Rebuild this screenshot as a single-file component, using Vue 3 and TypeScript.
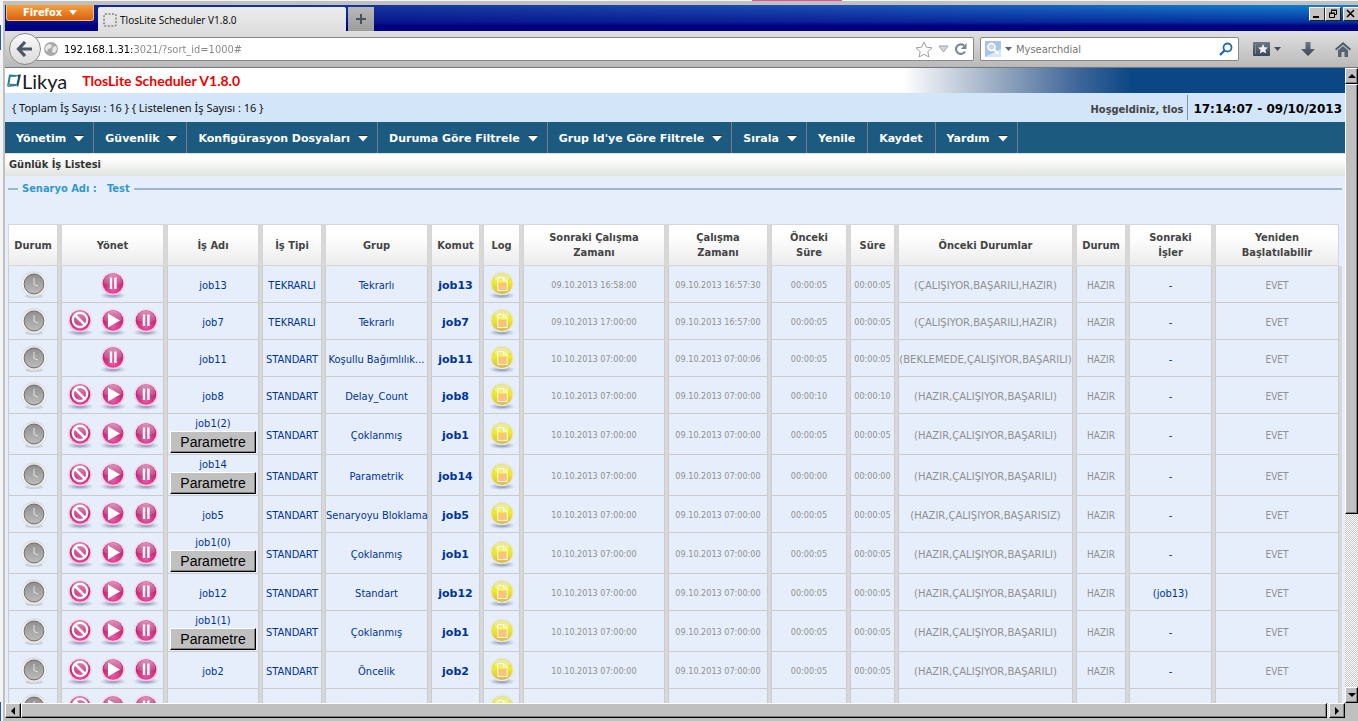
<script setup lang="ts">
interface Job {
  name: string
  type: string
  group: string
  command: string
  next: string
  last: string
  before: string
  duration: string
  history: string
  after: string
  full: boolean
  params: boolean
}

interface MenuItem {
  label: string
  arrow: boolean
}

const menu: MenuItem[] = [
  { label: 'Yönetim', arrow: true },
  { label: 'Güvenlik', arrow: true },
  { label: 'Konfigürasyon Dosyaları', arrow: true },
  { label: 'Duruma Göre Filtrele', arrow: true },
  { label: "Grup Id'ye Göre Filtrele", arrow: true },
  { label: 'Sırala', arrow: true },
  { label: 'Yenile', arrow: false },
  { label: 'Kaydet', arrow: false },
  { label: 'Yardım', arrow: true },
]

const columns: string[] = [
  'Durum', 'Yönet', 'İş Adı', 'İş Tipi', 'Grup', 'Komut', 'Log', 'Sonraki Çalışma Zamanı',
  'Çalışma Zamanı', 'Önceki Süre', 'Süre', 'Önceki Durumlar', 'Durum', 'Sonraki İşler', 'Yeniden Başlatılabilir',
]

const ready = '(HAZIR,ÇALIŞIYOR,BAŞARILI)'

function job(name: string, group: string, command: string, extra: Partial<Job> = {}): Job {
  return {
    name, group, command,
    type: 'STANDART',
    next: '10.10.2013 07:00:00',
    last: '09.10.2013 07:00:00',
    before: '00:00:05',
    duration: '00:00:05',
    history: ready,
    after: '-',
    full: true,
    params: false,
    ...extra,
  }
}

const jobs: Job[] = [
  job('job13', 'Tekrarlı', 'job13', { type: 'TEKRARLI', next: '09.10.2013 16:58:00', last: '09.10.2013 16:57:30', history: '(ÇALIŞIYOR,BAŞARILI,HAZIR)', full: false }),
  job('job7', 'Tekrarlı', 'job7', { type: 'TEKRARLI', next: '09.10.2013 17:00:00', last: '09.10.2013 16:57:00', history: '(ÇALIŞIYOR,BAŞARILI,HAZIR)' }),
  job('job11', 'Koşullu Bağımlılık...', 'job11', { last: '09.10.2013 07:00:06', history: '(BEKLEMEDE,ÇALIŞIYOR,BAŞARILI)', full: false }),
  job('job8', 'Delay_Count', 'job8', { before: '00:00:10', duration: '00:00:10' }),
  job('job1(2)', 'Çoklanmış', 'job1', { params: true }),
  job('job14', 'Parametrik', 'job14', { before: '00:00:00', duration: '00:00:00', params: true }),
  job('job5', 'Senaryoyu Bloklama', 'job5', { history: '(HAZIR,ÇALIŞIYOR,BAŞARISIZ)' }),
  job('job1(0)', 'Çoklanmış', 'job1', { params: true }),
  job('job12', 'Standart', 'job12', { after: '(job13)' }),
  job('job1(1)', 'Çoklanmış', 'job1', { params: true }),
  job('job2', 'Öncelik', 'job2'),
]
</script>

<template>
  <div class="screen">
    <svg class="defs" aria-hidden="true">
      <defs>
        <radialGradient id="gPink" cx="50%" cy="78%" r="70%">
          <stop offset="0" stop-color="#e85aa8" /><stop offset="0.55" stop-color="#c8357f" /><stop offset="1" stop-color="#b01a6e" />
        </radialGradient>
        <linearGradient id="gGloss" x1="0" y1="0" x2="0" y2="1">
          <stop offset="0" stop-color="#fff" stop-opacity="0.55" /><stop offset="1" stop-color="#fff" stop-opacity="0.08" />
        </linearGradient>
        <linearGradient id="gRim" x1="0" y1="0" x2="0" y2="1">
          <stop offset="0" stop-color="#f7dcec" /><stop offset="1" stop-color="#fbc3e2" />
        </linearGradient>
        <radialGradient id="gShadow">
          <stop offset="0" stop-color="#5d6f92" stop-opacity="0.85" /><stop offset="1" stop-color="#8c9ab8" stop-opacity="0" />
        </radialGradient>
        <linearGradient id="gYellow" x1="0" y1="0" x2="0" y2="1">
          <stop offset="0" stop-color="#d9dc70" /><stop offset="0.45" stop-color="#ecec28" /><stop offset="1" stop-color="#d8b958" />
        </linearGradient>
        <linearGradient id="gGrey" x1="0" y1="0" x2="0" y2="1">
          <stop offset="0" stop-color="#8f8f8f" /><stop offset="1" stop-color="#bcbcbc" />
        </linearGradient>
        <linearGradient id="gRing" x1="0" y1="0" x2="0" y2="1">
          <stop offset="0" stop-color="#dcdcdc" /><stop offset="0.5" stop-color="#fbfbfb" /><stop offset="1" stop-color="#e2e2e0" />
        </linearGradient>
        <linearGradient id="gSteel" x1="0" y1="0" x2="0" y2="1">
          <stop offset="0" stop-color="#6b7885" /><stop offset="1" stop-color="#3a4653" />
        </linearGradient>
      </defs>
      <symbol id="ball" viewBox="0 0 28 30">
        <ellipse cx="14" cy="25.500" rx="13.500" ry="3.600" fill="url(#gShadow)" />
        <circle cx="14" cy="13.500" r="12" fill="url(#gRim)" />
        <circle cx="14" cy="13.500" r="10.300" fill="url(#gPink)" />
        <path d="M4.500 13a9.500 9.500 0 0 1 19 0c-5 3-14 3-19 0z" fill="url(#gGloss)" />
      </symbol>
      <symbol id="pause" viewBox="0 0 28 30">
        <use href="#ball" width="28" height="30" />
        <path d="M10.800 7.500h2.400v11.500h-2.400zM15.200 7.500h2.400v11.500h-2.400z" fill="#fff" />
      </symbol>
      <symbol id="play" viewBox="0 0 28 30">
        <use href="#ball" width="28" height="30" />
        <path d="M9 6.500l12 7-12 7z" fill="#fff" />
      </symbol>
      <symbol id="ban" viewBox="0 0 28 30">
        <use href="#ball" width="28" height="30" />
        <circle cx="14" cy="13" r="7.200" fill="none" stroke="#fff" stroke-width="2.200" />
        <path d="M9 8l10 10" stroke="#fff" stroke-width="2.500" />
      </symbol>
      <symbol id="clock" viewBox="0 0 28 30">
        <ellipse cx="14" cy="26" rx="9" ry="2" fill="#b9bcc4" opacity="0.6" />
        <circle cx="14" cy="14" r="12.800" fill="#d9dbe0" />
        <circle cx="14" cy="14" r="12.200" fill="url(#gRing)" />
        <circle cx="14" cy="14" r="9.900" fill="url(#gGrey)" stroke="#6e6e6e" />
        <path d="M14 8v6.500l4 1.500" fill="none" stroke="#e2e2e2" />
      </symbol>
      <symbol id="log" viewBox="0 0 28 30">
        <ellipse cx="14" cy="25.500" rx="13.500" ry="3.600" fill="url(#gShadow)" />
        <circle cx="14" cy="13.500" r="12" fill="#e9e7dc" />
        <circle cx="14" cy="13.500" r="10.500" fill="url(#gYellow)" />
        <ellipse cx="14" cy="8" rx="7.500" ry="4.500" fill="#fff" opacity="0.35" />
        <path d="M10 13h9v7.500h-9z" fill="#f8c47c" />
        <path d="M9.800 7.500h5.700l3.700 3.500v9.500H9.800z" fill="none" stroke="#fffbe6" stroke-width="0.900" />
        <path d="M15.500 7.500v3.500h3.700" fill="none" stroke="#fffbe6" stroke-width="0.900" />
      </symbol>
    </svg>

    <div class="window">
      <header class="titlebar">
        <button class="firefox" type="button">Firefox <i class="tri"></i></button>
        <div class="tab">
          <svg width="14" height="14" viewBox="0 0 14 14"><rect x="1" y="1" width="12" height="12" rx="1" fill="none" stroke="#555" stroke-dasharray="2 1.500" /></svg>
          <span>TlosLite Scheduler V1.8.0</span>
        </div>
        <button class="newtab" type="button" aria-label="Yeni sekme">
          <svg width="12" height="12" viewBox="0 0 12 12"><path d="M6 1v10M1 6h10" stroke="#46525e" stroke-width="2" /></svg>
        </button>
        <div class="winbtns">
          <button type="button" aria-label="Simge durumuna küçült"><svg width="12" height="10" viewBox="0 0 12 10"><path d="M2 8h6" stroke="#000" stroke-width="2" /></svg></button>
          <button type="button" aria-label="Önceki boyut"><svg width="12" height="10" viewBox="0 0 12 10"><path d="M4.500 5V1.500h5v4H8M4 1h6M2.500 4.500h5v4h-5zM2 4h6" fill="none" stroke="#000" /></svg></button>
          <button class="shut" type="button" aria-label="Kapat"><svg width="10" height="10" viewBox="0 0 10 10"><path d="M1 1l7 7M8 1L1 8" stroke="#000" stroke-width="1.600" /></svg></button>
        </div>
      </header>

      <nav class="toolbar">
        <button class="back" type="button" aria-label="Geri">
          <svg width="18" height="16" viewBox="0 0 18 16"><path d="M9 1L2.500 8 9 15M3 8h13" fill="none" stroke="#4b5763" stroke-width="3.200" /></svg>
        </button>
        <div class="field url">
          <svg width="16" height="16" viewBox="0 0 16 16"><circle cx="8" cy="8" r="7" fill="#a9a9a9" /><path d="M3 5l3-2 3 1-1 3-3 1-1 3-2-3zM10 6l3-1 1 3-2 4-3-1z" fill="#e8e8e8" /></svg>
          <input type="text" aria-label="Adres" value="192.168.1.31:3021/?sort_id=1000#" />
          <svg width="18" height="17" viewBox="0 0 18 17"><path d="M9 1l2.400 5.200 5.600.6-4.200 3.800 1.200 5.500L9 13.300l-5 2.800 1.200-5.500L1 6.800l5.600-.6z" fill="#fafafa" stroke="#9ba0a6" /></svg>
          <svg width="11" height="8" viewBox="0 0 11 8"><path d="M1 1h9L5.500 7z" fill="#d5d9dd" stroke="#9aa3ab" /></svg>
          <svg width="14" height="14" viewBox="0 0 14 14"><path d="M11 9.500A4.800 4.800 0 1 1 10 3.500" fill="none" stroke="#7e8994" stroke-width="2.200" /><path d="M12.500 1v6H6.800z" fill="#7e8994" /></svg>
        </div>
        <div class="field search">
          <svg width="16" height="16" viewBox="0 0 16 16"><rect width="16" height="16" fill="#a9c3ea" /><path d="M0 16L16 8v8z" fill="#d8e6f8" /><circle cx="6.500" cy="6" r="3.500" fill="#c6d8f2" stroke="#fff" stroke-width="1.600" /><path d="M9 8.500l4.500 4.500" stroke="#fff" stroke-width="2" /></svg>
          <svg width="7" height="5" viewBox="0 0 7 5"><path d="M0 0h7L3.500 4z" fill="#666" /></svg>
          <input type="text" aria-label="Arama" placeholder="Mysearchdial" />
          <svg width="14" height="14" viewBox="0 0 14 14"><circle cx="8.500" cy="5.500" r="4" fill="none" stroke="#2a6aa8" stroke-width="1.800" /><path d="M5.500 8.500L1 13" stroke="#2a6aa8" stroke-width="2.400" /></svg>
        </div>
        <div class="tools">
          <button type="button" aria-label="Yer imleri">
            <svg width="28" height="16" viewBox="0 0 28 16"><rect y="1" width="17" height="14" rx="1" fill="url(#gSteel)" /><path d="M2.500 3v10" stroke="#7d8893" /><path d="M10 3l1.500 3.200 3.500.4-2.600 2.300.8 3.600L10 10.700l-3.200 1.800.8-3.600L5 6.600l3.500-.4z" fill="#eee" /><path d="M21 6h7l-3.500 4z" fill="#444d57" /></svg>
          </button>
          <button type="button" aria-label="İndirilenler">
            <svg width="14" height="14" viewBox="0 0 14 14"><path d="M4.500 0h5v7H14l-7 7-7-7h4.500z" fill="url(#gSteel)" /></svg>
          </button>
          <button type="button" aria-label="Giriş sayfası">
            <svg width="16" height="15" viewBox="0 0 16 15"><path d="M8 0l8 7-1.200 1.500L8 2.700 1.200 8.500 0 7z" fill="#4f5b67" /><path d="M3 8.200l5-4.300 5 4.300V15H9.500v-5h-3v5H3z" fill="#56626e" /></svg>
          </button>
        </div>
      </nav>

      <div class="viewport">
        <main class="page">
          <header class="brand">
            <svg width="14" height="17" viewBox="0 0 14 17"><path d="M2 2.500l8 .5-.5 1.800-6 .2z" fill="#2b8095" /><path d="M2 2.500l1.700 2L2.500 12 0 14.500z" fill="#2b8095" /><path d="M0 15l3-3.200 6.500.2.500 2z" fill="#3a7f96" /><path d="M10 3l4-.8-3 13.300-1.500-3.500 1.600-6.500z" fill="#174f70" /></svg>
            <span class="likya">Likya</span>
            <h1>TlosLite Scheduler V1.8.0</h1>
          </header>
          <div class="info">
            <span class="counts">{ Toplam İş Sayısı : 16 } { Listelenen İş Sayısı : 16 }</span>
            <span class="hello">Hoşgeldiniz, tlos</span>
            <time class="now">17:14:07 - 09/10/2013</time>
          </div>
          <div class="menu">
            <button v-for="m in menu" :key="m.label" type="button" :class="{ drop: m.arrow }">
              {{ m.label }}<svg v-if="m.arrow" width="12" height="8" viewBox="0 0 12 8"><path d="M1 1h10L6 6.500z" fill="#fff" /><path d="M1 .5h10" stroke="#333" /></svg>
            </button>
          </div>
          <h2>Günlük İş Listesi</h2>
          <section class="panel">
            <fieldset>
              <legend>Senaryo Adı :&nbsp;&nbsp; Test</legend>
              <div class="clip">
                <table>
                  <colgroup><col v-for="(c, i) in columns" :key="i" :class="'c' + i" /></colgroup>
                  <thead>
                    <tr><th v-for="(c, i) in columns" :key="i" scope="col">{{ c }}</th></tr>
                  </thead>
                  <tbody>
                    <tr v-for="j in jobs" :key="j.name" :class="{ tall: j.params }">
                      <td><svg class="ico"><use href="#clock" /></svg></td>
                      <td>
                        <div class="acts">
                          <button v-if="j.full" type="button" aria-label="Durdur"><svg class="ico"><use href="#ban" /></svg></button>
                          <button v-if="j.full" type="button" aria-label="Başlat"><svg class="ico"><use href="#play" /></svg></button>
                          <button type="button" aria-label="Beklet"><svg class="ico"><use href="#pause" /></svg></button>
                        </div>
                      </td>
                      <td><a href="#">{{ j.name }}</a><button v-if="j.params" class="param" type="button">Parametre</button></td>
                      <td class="blue">{{ j.type }}</td>
                      <td class="blue">{{ j.group }}</td>
                      <td><a class="cmd" href="#">{{ j.command }}</a></td>
                      <td><svg class="ico"><use href="#log" /></svg></td>
                      <td>{{ j.next }}</td>
                      <td>{{ j.last }}</td>
                      <td>{{ j.before }}</td>
                      <td>{{ j.duration }}</td>
                      <td class="caps">{{ j.history }}</td>
                      <td class="state">HAZIR</td>
                      <td class="blue">{{ j.after }}</td>
                      <td class="state">EVET</td>
                    </tr>
                    <tr>
                      <td><svg class="ico"><use href="#clock" /></svg></td>
                      <td>
                        <div class="acts">
                          <button type="button" aria-label="Durdur"><svg class="ico"><use href="#ban" /></svg></button>
                          <button type="button" aria-label="Başlat"><svg class="ico"><use href="#play" /></svg></button>
                          <button type="button" aria-label="Beklet"><svg class="ico"><use href="#pause" /></svg></button>
                        </div>
                      </td>
                      <td v-for="n in 4" :key="n"></td>
                      <td><svg class="ico"><use href="#log" /></svg></td>
                      <td v-for="n in 8" :key="'e' + n"></td>
                    </tr>
                  </tbody>
                </table>
              </div>
            </fieldset>
          </section>
        </main>
        <div class="vbar">
          <button type="button" aria-label="Yukarı"><svg width="8" height="4" viewBox="0 0 8 4"><path d="M0 4h8L4 0z" /></svg></button>
          <div class="thumb"></div>
          <div class="rest"></div>
          <button type="button" aria-label="Aşağı"><svg width="8" height="4" viewBox="0 0 8 4"><path d="M0 0h8L4 4z" /></svg></button>
        </div>
        <div class="hbar">
          <button type="button" aria-label="Sola"><svg width="4" height="8" viewBox="0 0 4 8"><path d="M4 0v8L0 4z" /></svg></button>
          <div class="thumb"></div>
          <div class="rest"></div>
          <button type="button" aria-label="Sağa"><svg width="4" height="8" viewBox="0 0 4 8"><path d="M0 0v8l4-4z" /></svg></button>
        </div>
      </div>
    </div>
  </div>
</template>

<style>
html, body { overflow: hidden; }
</style>

<style scoped>
* { box-sizing: border-box; }
button { margin: 0; padding: 0; border: 0; background: none; font: inherit; color: inherit; }
svg { display: block; flex: none; }
.defs { position: absolute; width: 0; height: 0; }
.screen {
  height: 100vh; padding: 1px 0 0 3px; overflow: hidden;
  background:
    linear-gradient(#e0559a, #e0559a) 752px 0 / 90px 1px no-repeat,
    linear-gradient(#2b57a4, #2b57a4) 0 25px / 1px 25px no-repeat,
    linear-gradient(#2b57a4, #2b57a4) 0 100% / 1px 19px no-repeat, #f4f4f4;
  font-family: "DejaVu Sans Condensed", "DejaVu Sans", Tahoma, sans-serif; font-size: 10px;
}
.window { height: 100%; display: flex; flex-direction: column; background: #c0c0c0; padding: 4px 0 3px 2px; }

.titlebar {
  display: flex; align-items: flex-start; height: 26px; flex: none;
  background: linear-gradient(rgba(0, 0, 128, 0), rgba(0, 0, 128, 0.6) 65%, #000080 80%), linear-gradient(90deg, #10248c, #1c50b4 60%, #1084d0);
}
.firefox {
  display: flex; align-items: center; justify-content: center; gap: 7px; width: 88px; height: 16px; margin-left: 1px;
  background: linear-gradient(#f5a040, #d9620c); border: 1px solid #f8c080; border-top: 0; border-radius: 0 0 3px 3px;
  color: #fff; font-weight: bold; font-size: 11px; line-height: 14px;
}
.tri { border: 4px solid transparent; border-top: 5px solid #fff; border-bottom: 0; }
.tab {
  display: flex; align-items: center; gap: 3px; width: 248px; height: 24px; margin: 2px 2px 0 4px; padding: 1px 0 0 5px;
  background: linear-gradient(#ececec, #dedede); border-radius: 2px 2px 0 0; color: #111;
}
.tab span { font-family: "Noto Sans", sans-serif; font-size: 10px; }
.newtab { display: grid; place-items: center; width: 26px; height: 24px; margin-top: 2px; background: linear-gradient(#b9b9b9, #9c9c9c); }
.winbtns { display: flex; margin: 2px 0 0 auto; }
.winbtns button { display: grid; place-items: center; width: 16px; height: 14px; background: #c6c3c0; border: 1px solid; border-color: #fff #222 #222 #fff; }
.winbtns .shut { margin-left: 2px; width: 15px; border-right: 0; }

.toolbar { display: flex; align-items: center; height: 37px; flex: none; background: linear-gradient(#e0e0e0, #b9b9b9); border-bottom: 1px solid #777; }
.back {
  display: grid; place-items: center; width: 32px; height: 32px; margin-left: 4px; border: 1px solid #8c8c8c; border-radius: 50%;
  background: linear-gradient(#fcfcfc, #d9d9d9); z-index: 1;
}
.field { display: flex; align-items: center; height: 24px; background: #fff; border: 1px solid #888; border-radius: 2px; }
.field input { border: 0; outline: 0; padding: 1px 0 0; min-width: 0; flex: 1; background: none; font: inherit; font-size: 11px; color: #111; }
.url { flex: 1; margin-left: -6px; padding: 0 5px 0 8px; border-left: 0; gap: 5px; }
.field.url input { background: linear-gradient(90deg, #000 69px, #858585 69px); background-clip: text; -webkit-background-clip: text; color: transparent; }
.search { width: 259px; margin-left: 6px; padding: 0 5px 0 4px; gap: 4px; }
.search input::placeholder { color: #777; opacity: 1; }
.tools { display: flex; align-items: center; gap: 20px; margin: 0 7px 0 14px; }

.viewport { flex: 1; min-height: 0; display: grid; grid-template: minmax(0, 1fr) 15px / minmax(0, 1fr) 13px; }
.page { overflow: hidden; background: #e6eefb; }
.brand {
  display: flex; align-items: center; height: 25px; padding-left: 2px;
  background: linear-gradient(90deg, #fff 67%, #c5cfdc 71%, #8ba0bb 75%, #3f679b 80%, #0c4785 84%);
}
.likya { margin-left: 1px; font-family: Lato, sans-serif; font-size: 20px; line-height: 24px; color: #1b1b1b; }
h1 { margin: 0 0 0 15px; font-family: Lato, sans-serif; font-size: 14px; line-height: 24px; font-weight: bold; color: #f00000; }
.info { display: flex; align-items: center; height: 29px; background: #d2e5f9; color: #111; }
.counts { padding-left: 7px; font-family: "Noto Sans", sans-serif; font-size: 11px; }
.hello { margin-left: auto; font-weight: bold; font-size: 11px; color: #444; padding: 3px 4px 0 0; }
.now { display: flex; align-items: center; height: 25px; padding: 3px 3px 0 5px; border-left: 1px solid #8296ad; font-family: "DejaVu Sans", sans-serif; font-weight: bold; font-size: 12px; color: #000; }
.menu { display: flex; height: 31px; background: #1c5a80; }
.menu button {
  display: flex; align-items: center; gap: 7px; padding: 2px 12px 0 11px; border-right: 1px solid #777b8c; color: #fff; white-space: nowrap;
  font-family: "DejaVu Sans", sans-serif; font-weight: bold; font-size: 11px;
}
.menu .drop { padding-right: 8px; }
h2 { margin: 0; height: 23px; padding-left: 4px; border: 1px solid #e0e3e3; border-width: 1px 0; background: linear-gradient(#fff 20%, #e3e5e1); font-size: 11px; line-height: 21px; color: #333; }
.panel { padding: 6px 3px 0; }
fieldset { margin: 0; padding: 28px 0 0; min-width: 0; border: 0; border-top: 2px solid #9ab7d8; }
legend { margin-left: 10px; padding: 0 4px; font-size: 11px; line-height: 14px; font-weight: bold; color: #3399cc; }
.clip { overflow: hidden; }
table { width: calc(100% + 3px); margin-left: -3px; table-layout: fixed; border-collapse: separate; border-spacing: 3px 0; background: #d8d8d8; }
.c0, .c12 { width: 50px; }
.c1, .c4 { width: 103px; }
.c2 { width: 92px; }
.c3 { width: 60px; }
.c5 { width: 49px; }
.c6 { width: 37px; }
.c7 { width: 142px; }
.c8 { width: 100px; }
.c9 { width: 76px; }
.c10 { width: 45px; }
.c11 { width: 175px; }
.c13 { width: 83px; }
th { height: 42px; padding: 0 12px; border: 1px solid #d6d6d6; background: linear-gradient(#fff 25%, #ececec); font-size: 11px; line-height: 15px; color: #444; }
th:nth-child(1), th:nth-child(4), th:nth-child(6), th:nth-child(7), th:nth-child(11), th:nth-child(13) { padding: 0; }
th:nth-child(8) { padding: 0 20px; }
th:last-child { box-shadow: 4px 0 0 #e6eefb; }
td { height: 37px; padding: 2px 0 0; border: 1px solid #cbcbcb; border-top: 0; background: #e6eefb; text-align: center; white-space: nowrap; font-size: 9px; line-height: 13px; color: #909090; }
td:first-child { padding-left: 2px; }
.tall td { height: 41px; }
td a { display: block; color: #003399; text-decoration: none; font-size: 11px; }
.blue { font-size: 11px; color: #003399; }
.caps { font-family: "DejaVu Sans", sans-serif; font-size: 10px; }
.state { font-size: 10px; }
td a.cmd { font-family: "DejaVu Sans", sans-serif; font-weight: bold; font-size: 11px; }
.ico { width: 28px; height: 30px; margin: 0 auto; }
.acts { display: flex; justify-content: center; gap: 5px; }
.param {
  width: 86px; height: 22px; margin: 1px auto 0; display: block; border: 1px solid; border-color: #fff #000 #000 #fff; box-shadow: inset -1px -1px #808080;
  background: #c0c0c0; color: #000; font-family: "Liberation Sans", sans-serif; font-size: 14px; line-height: 18px;
}

.vbar, .hbar { display: flex; background: repeating-conic-gradient(#fff 0 25%, #c6c6c6 0 50%) 0 0 / 2px 2px; }
.vbar { flex-direction: column; }
.vbar button, .hbar button, .thumb { display: grid; place-items: center; background: #c0c0c0; border: 1px solid; border-color: #fff #000 #000 #fff; box-shadow: inset -1px -1px #808080; }
.vbar button { height: 16px; }
.hbar button { width: 16px; }
.vbar .thumb { flex: 430; }
.vbar .rest { flex: 174; }
.hbar .thumb { flex: 1; }
.hbar .rest { width: 2px; }
</style>
